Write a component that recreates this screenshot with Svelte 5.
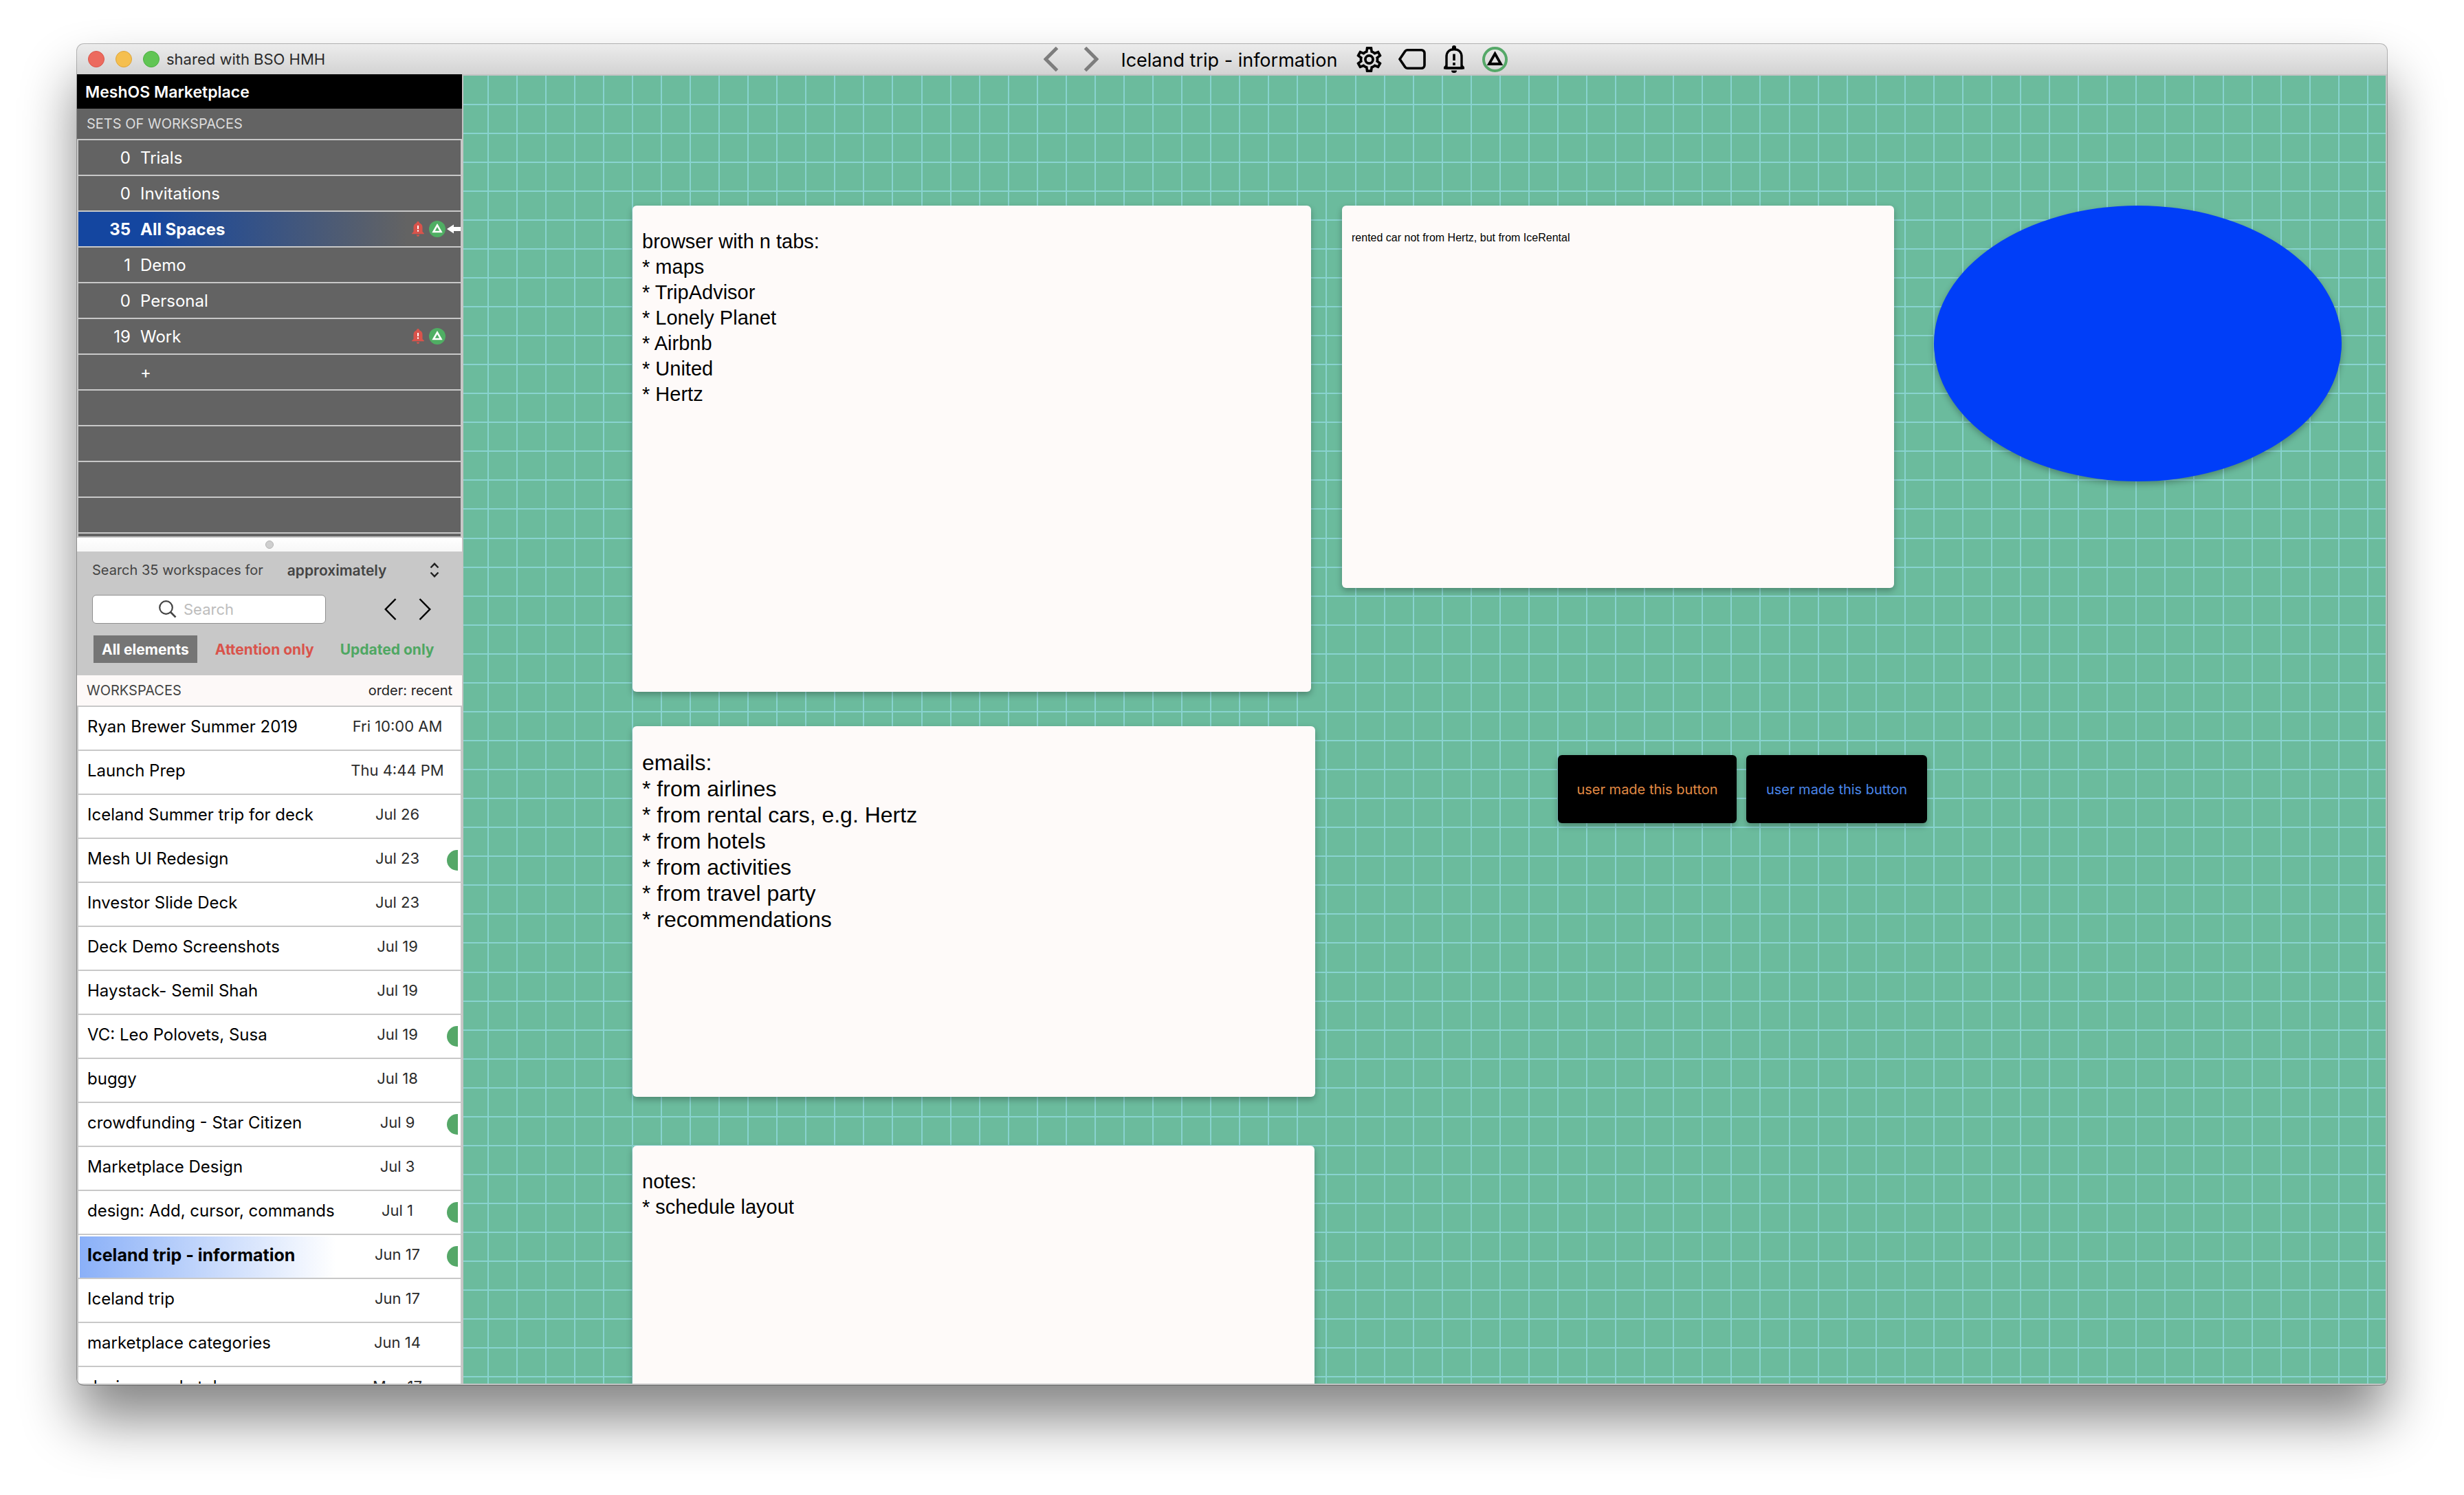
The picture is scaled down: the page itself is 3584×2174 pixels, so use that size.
<script>
  const sets = [
    { count: 0, name: 'Trials' },
    { count: 0, name: 'Invitations' },
    { count: 35, name: 'All Spaces', alerts: true, current: true },
    { count: 1, name: 'Demo' },
    { count: 0, name: 'Personal' },
    { count: 19, name: 'Work', alerts: true },
    { count: '', name: '+' }
  ];
  const emptySetRows = [1, 2, 3, 4, 5];

  const workspaces = [
    { name: 'Ryan Brewer Summer 2019', date: 'Fri 10:00 AM' },
    { name: 'Launch Prep', date: 'Thu 4:44 PM' },
    { name: 'Iceland Summer trip for deck', date: 'Jul 26' },
    { name: 'Mesh UI Redesign', date: 'Jul 23', updated: true },
    { name: 'Investor Slide Deck', date: 'Jul 23' },
    { name: 'Deck Demo Screenshots', date: 'Jul 19' },
    { name: 'Haystack- Semil Shah', date: 'Jul 19' },
    { name: 'VC: Leo Polovets, Susa', date: 'Jul 19', updated: true },
    { name: 'buggy', date: 'Jul 18' },
    { name: 'crowdfunding - Star Citizen', date: 'Jul 9', updated: true },
    { name: 'Marketplace Design', date: 'Jul 3' },
    { name: 'design: Add, cursor, commands', date: 'Jul 1', updated: true },
    { name: 'Iceland trip - information', date: 'Jun 17', updated: true, current: true },
    { name: 'Iceland trip', date: 'Jun 17' },
    { name: 'marketplace categories', date: 'Jun 14' },
    { name: 'design: marketplace', date: 'May 17' }
  ];

  const filters = [
    { id: 'all', label: 'All elements' },
    { id: 'attention', label: 'Attention only' },
    { id: 'updated', label: 'Updated only' }
  ];
  let filter = $state('all');
  let match = $state('approximately');
  let query = $state('');

  // Grid cells are 42px wide, with one extra pixel every 15 cells.
  const gridLine = (start, i) => start + i * 42 + Math.floor(i / 15);
  const columns = Array.from({ length: 90 }, (_, i) => gridLine(35, i));
  const rows = Array.from({ length: 70 }, (_, i) => gridLine(41, i));
</script>

{#snippet bell()}
  <svg class="bell" viewBox="0 0 18 22" aria-hidden="true">
    <path fill="#d9534b" d="M9 0c1.300 0 2 1 2 2.300 2.800 1 4.500 3.200 4.500 6.200v6.500l2.300 2.300v1H.2v-1L2.500 15V8.500c0-3 1.700-5.200 4.500-6.200C7 1 7.700 0 9 0zM7 19.500h4c0 1.500-.8 2.500-2 2.500s-2-1-2-2.500z" />
    <path fill="#fff" d="M8 6h2v5H8zM8 12.500h2v2.200H8z" />
  </svg>
{/snippet}

<div class="desktop">
  <div class="window">
    <header class="titlebar">
      <div class="owner">
        <button class="light close" aria-label="Close"></button>
        <button class="light minimize" aria-label="Minimize"></button>
        <button class="light zoom" aria-label="Zoom"></button>
        <span>shared with BSO HMH</span>
      </div>
      <div class="toolbar">
        <div class="history">
          <button aria-label="Back">
            <svg width="22" height="36" viewBox="0 0 22 36"><path d="M19.500 1.500 3 18l16.500 16.500" fill="none" stroke="#7d7d7d" stroke-width="5" /></svg>
          </button>
          <button aria-label="Forward">
            <svg width="22" height="36" viewBox="0 0 22 36"><path d="M2.500 1.500 19 18 2.500 34.500" fill="none" stroke="#7d7d7d" stroke-width="5" /></svg>
          </button>
        </div>
        <h1>Iceland trip - information</h1>
        <button aria-label="Settings">
          <svg width="37" height="37" viewBox="2 2 20 20"><path d="M12,8A4,4 0 0,1 16,12A4,4 0 0,1 12,16A4,4 0 0,1 8,12A4,4 0 0,1 12,8M12,10A2,2 0 0,0 10,12A2,2 0 0,0 12,14A2,2 0 0,0 14,12A2,2 0 0,0 12,10M10,22C9.750,22 9.540,21.820 9.500,21.580L9.130,18.930C8.500,18.680 7.960,18.340 7.440,17.940L4.950,18.950C4.730,19.030 4.460,18.950 4.340,18.730L2.340,15.270C2.210,15.050 2.270,14.780 2.460,14.630L4.570,12.970L4.500,12L4.570,11L2.460,9.370C2.270,9.220 2.210,8.950 2.340,8.730L4.340,5.270C4.460,5.050 4.730,4.960 4.950,5.050L7.440,6.050C7.960,5.660 8.500,5.320 9.130,5.070L9.500,2.420C9.540,2.180 9.750,2 10,2H14C14.250,2 14.460,2.180 14.500,2.420L14.870,5.070C15.500,5.320 16.040,5.660 16.560,6.050L19.050,5.050C19.270,4.960 19.540,5.050 19.660,5.270L21.660,8.730C21.790,8.950 21.730,9.220 21.540,9.370L19.430,11L19.500,12L19.430,13L21.540,14.630C21.730,14.780 21.790,15.050 21.660,15.270L19.660,18.730C19.540,18.950 19.270,19.040 19.050,18.950L16.560,17.950C16.040,18.340 15.500,18.680 14.870,18.930L14.500,21.580C14.460,21.820 14.250,22 14,22H10M11.250,4L10.880,6.610C9.680,6.860 8.620,7.500 7.850,8.390L5.440,7.350L4.690,8.650L6.800,10.200C6.400,11.370 6.400,12.640 6.800,13.800L4.680,15.360L5.430,16.660L7.860,15.620C8.630,16.500 9.680,17.140 10.870,17.380L11.240,20H12.760L13.130,17.390C14.320,17.140 15.370,16.500 16.140,15.620L18.570,16.660L19.320,15.360L17.200,13.810C17.600,12.640 17.600,11.370 17.200,10.200L19.310,8.650L18.560,7.350L16.150,8.390C15.380,7.500 14.320,6.860 13.120,6.620L12.750,4H11.250Z" /></svg>
        </button>
        <button aria-label="Label">
          <svg width="40" height="30" viewBox="0 0 40 30"><path d="M13 1.800h20.500a4.500 4.500 0 0 1 4.500 4.500v17.400a4.500 4.500 0 0 1-4.500 4.500H13a4 4 0 0 1-3.200-1.700L2 15 9.800 3.500A4 4 0 0 1 13 1.800z" fill="none" stroke="#000" stroke-width="3.600" /></svg>
        </button>
        <button aria-label="Alerts">
          <svg width="34" height="40" viewBox="0 0 34 40">
            <path d="M17 0a3 3 0 0 1 3 3v3h-6V3a3 3 0 0 1 3-3zM13 36.500h8a4 3.500 0 0 1-8 0zM2 31.500 6 27v4h22v-4l4 4.500V34.500H2z" />
            <path d="M6 33V16.500C6 9.500 10.500 5.800 17 5.800S28 9.500 28 16.500V33z" fill="none" stroke="#000" stroke-width="3.400" />
            <path d="M15.200 12.500h3.600v9.500h-3.600zM15.200 25h3.600v4h-3.600z" />
          </svg>
        </button>
        <button aria-label="Updates">
          <svg width="37" height="37" viewBox="0 0 37 37">
            <circle cx="18.500" cy="18.500" r="16.500" fill="none" stroke="#55a868" stroke-width="4" />
            <path d="M18.500 10 27 25H10z" fill="none" stroke="#000" stroke-width="3.800" />
          </svg>
        </button>
      </div>
    </header>

    <div class="body">
      <aside class="sidebar">
        <h2 class="product">MeshOS Marketplace</h2>
        <h3 class="sets-heading">SETS OF WORKSPACES</h3>
        <ul class="sets">
          {#each sets as set}
            <li>
              <button class="set" class:current={set.current}>
                <span class="count">{set.count}</span>
                <span class="set-name">{set.name}</span>
                {#if set.alerts}
                  <span class="badges">
                    {@render bell()}
                    <svg class="update" viewBox="0 0 24 24" aria-hidden="true">
                      <circle cx="12" cy="12" r="12" fill="#4fae63" />
                      <path d="M12 6.500 17.500 16h-11z" fill="none" stroke="#fff" stroke-width="2.500" />
                    </svg>
                  </span>
                {/if}
                <span class="pointer">
                  {#if set.current}
                    <svg width="20" height="14" viewBox="0 0 20 14" aria-hidden="true"><path d="M0 7 10 .5V4h10v6H10v3.500z" fill="#fff" /></svg>
                  {/if}
                </span>
              </button>
            </li>
          {/each}
          {#each emptySetRows as row (row)}
            <li class="blank"></li>
          {/each}
        </ul>

        <div class="splitter"><span></span></div>

        <section class="search">
          <div class="search-mode">
            <label for="match">Search 35 workspaces for</label>
            <div class="select">
              <select id="match" bind:value={match}>
                <option>approximately</option>
                <option>exactly</option>
              </select>
              <svg width="14" height="22" viewBox="0 0 14 22" aria-hidden="true"><path d="M1.500 7.500 7 1.800l5.500 5.700M1.500 14.500 7 20.200l5.500-5.700" fill="none" stroke="#222" stroke-width="2.400" /></svg>
            </div>
          </div>
          <div class="search-row">
            <label class="field">
              <svg width="26" height="26" viewBox="0 0 26 26" aria-hidden="true"><circle cx="10.500" cy="10.500" r="9.300" fill="none" stroke="#444" stroke-width="2.200" /><path d="m17 17 7.500 7.500" stroke="#444" stroke-width="2.600" /></svg>
              <input type="text" placeholder="Search" aria-label="Search" bind:value={query} />
            </label>
            <div class="steps">
              <button aria-label="Previous result">
                <svg width="18" height="32" viewBox="0 0 18 32"><path d="M16.500 1 1.800 16l14.700 15" fill="none" stroke="#000" stroke-width="2.500" /></svg>
              </button>
              <button aria-label="Next result">
                <svg width="18" height="32" viewBox="0 0 18 32"><path d="M1.500 1l14.700 15L1.500 31" fill="none" stroke="#000" stroke-width="2.500" /></svg>
              </button>
            </div>
          </div>
          <div class="filters">
            {#each filters as f (f.id)}
              <button class="filter {f.id}" class:active={filter === f.id} aria-pressed={filter === f.id} onclick={() => (filter = f.id)}>{f.label}</button>
            {/each}
          </div>
        </section>

        <div class="list-heading">
          <h3>WORKSPACES</h3>
          <button>order: recent</button>
        </div>
        <ul class="workspaces">
          {#each workspaces as ws}
            <li>
              <button class="workspace" class:current={ws.current}>
                <span class="ws-name">{ws.name}</span>
                <span class="ws-date">{ws.date}</span>
                <span class="ws-dot" class:on={ws.updated}></span>
              </button>
            </li>
          {/each}
        </ul>
      </aside>

      <main class="canvas">
        <svg class="grid" aria-hidden="true">
          {#each rows as y}<rect x="0" {y} width="100%" height="2" />{/each}
          {#each columns as x}<rect {x} y="0" width="2" height="100%" />{/each}
        </svg>

        <article class="note tabs">browser with n tabs:
* maps
* TripAdvisor
* Lonely Planet
* Airbnb
* United
* Hertz</article>
        <article class="note rental">rented car not from Hertz, but from IceRental</article>
        <div class="ellipse"></div>
        <article class="note emails">emails:
* from airlines
* from rental cars, e.g. Hertz
* from hotels
* from activities
* from travel party
* recommendations</article>
        <article class="note notes">notes:
* schedule layout</article>
        <button class="made orange">user made this button</button>
        <button class="made blue">user made this button</button>
      </main>
    </div>
  </div>
</div>

<style>
  :global(body) {
    margin: 0;
    background: #fff;
  }

  .desktop {
    box-sizing: border-box;
    height: 100vh;
    padding: 64px 112px 160px;
    overflow: hidden;
    display: flex;
    font-family: 'Inter', 'Liberation Sans', sans-serif;
    color: #000;
  }

  .desktop :is(h1, h2, h3, ul) {
    margin: 0;
    padding: 0;
    font-weight: 400;
    list-style: none;
  }

  button,
  select,
  input {
    margin: 0;
    padding: 0;
    border: 0;
    background: none;
    font: inherit;
    color: inherit;
  }

  svg {
    display: block;
    flex: none;
  }

  .window {
    flex: 1;
    min-width: 0;
    display: flex;
    flex-direction: column;
    overflow: hidden;
    border-radius: 10px;
    background: #c4c4c4;
    box-shadow:
      0 0 0 1px rgba(0, 0, 0, 0.28),
      0 50px 80px rgba(0, 0, 0, 0.48);
  }

  /* Title bar */
  .titlebar {
    flex: none;
    height: 44px;
    display: grid;
    grid-template-columns: 11fr auto 10fr;
    align-items: center;
    background: linear-gradient(#ececec, #d3d3d3);
  }

  .owner {
    display: flex;
    align-items: center;
    gap: 16px;
    padding-left: 16px;
    font-size: 22px;
    color: #2b2b2b;
  }

  .owner span {
    margin-left: -6px;
  }

  .light {
    width: 24px;
    height: 24px;
    border-radius: 50%;
  }

  .close {
    background: #ec6a5e;
    border: 1px solid #d9564b;
  }

  .minimize {
    background: #f5bf4f;
    border: 1px solid #dca43a;
  }

  .zoom {
    background: #61c554;
    border: 1px solid #4caf40;
  }

  .toolbar {
    display: flex;
    align-items: center;
    gap: 24px;
  }

  .history {
    display: flex;
    gap: 36px;
    margin-right: 8px;
  }

  .titlebar h1 {
    padding: 4px 4px 0 0;
    font-size: 27px;
    line-height: 36px;
    white-space: nowrap;
  }

  .body {
    flex: 1;
    min-height: 0;
    display: flex;
    padding: 0 2px 2px 0;
  }

  /* Sidebar */
  .sidebar {
    flex: none;
    width: 560px;
    margin-right: 2px;
    display: flex;
    flex-direction: column;
    background: #fff;
  }

  .sidebar .product {
    flex: none;
    padding: 2px 12px 0;
    font-size: 23px;
    font-weight: 600;
    line-height: 48px;
    color: #fff;
    background: #000;
  }

  .sidebar .sets-heading {
    flex: none;
    padding: 0 14px;
    font-size: 20px;
    line-height: 44px;
    color: #dcdcdc;
    background: #636363;
  }

  .sets {
    flex: none;
    box-sizing: border-box;
    height: 580px;
    overflow: hidden;
    border: 2px solid #c8c8c8;
    border-top: 0;
    background: #636363;
    color: #fff;
    font-size: 24px;
  }

  .desktop .sets,
  .desktop .workspaces {
    padding: 0;
  }

  .sets li {
    height: 50px;
    border-top: 2px solid #c8c8c8;
  }

  .set {
    width: 100%;
    height: 50px;
    display: flex;
    align-items: center;
    text-align: left;
  }

  .set.current {
    font-weight: 700;
    background: linear-gradient(90deg, #1446a0 18%, #636363 86%);
  }

  .count {
    width: 76px;
    text-align: right;
  }

  .set-name {
    flex: 1;
    padding-left: 14px;
  }

  .badges {
    display: flex;
    align-items: center;
    gap: 7px;
  }

  .bell {
    width: 18px;
    height: 22px;
  }

  .update {
    width: 24px;
    height: 24px;
  }

  .pointer {
    width: 20px;
    margin-left: 2px;
  }

  .splitter {
    flex: none;
    height: 20px;
    display: grid;
    place-items: center;
    background: linear-gradient(#fff, #f7f7f7);
  }

  .splitter span {
    width: 10px;
    height: 10px;
    border: 1px solid #b4b4b4;
    border-radius: 50%;
    background: #cfcfcf;
  }

  /* Search panel */
  .search {
    flex: none;
    padding: 0 22px 18px;
    background: #c8c8c8;
  }

  .search-mode {
    height: 54px;
    display: flex;
    align-items: center;
    gap: 35px;
    font-size: 20px;
    color: #444;
  }

  .select {
    flex: 1;
    display: grid;
    align-items: center;
  }

  .select select,
  .select svg {
    grid-area: 1 / 1;
  }

  .select select {
    appearance: none;
    font-size: 21px;
    font-weight: 600;
  }

  .select svg {
    justify-self: end;
    margin-right: 11px;
    pointer-events: none;
  }

  .search-row {
    display: flex;
    align-items: center;
    justify-content: space-between;
    margin-top: 9px;
  }

  .field {
    box-sizing: border-box;
    width: 340px;
    height: 42px;
    display: flex;
    align-items: center;
    gap: 10px;
    padding-left: 96px;
    border: 1px solid #8f8f8f;
    border-radius: 6px;
    background: #fff;
  }

  .field input {
    flex: 1;
    min-width: 0;
    font-size: 22px;
    outline: 0;
  }

  .field input::placeholder {
    color: #bdbdbd;
    opacity: 1;
  }

  .steps {
    display: flex;
    gap: 32px;
    padding-right: 23px;
  }

  .filters {
    display: flex;
    margin-top: 17px;
    padding-left: 2px;
    gap: 14px;
    font-size: 21px;
    font-weight: 700;
  }

  .filter {
    height: 40px;
    padding: 0 12px;
    white-space: nowrap;
  }

  .attention {
    color: #d9534b;
  }

  .updated {
    color: #4fa763;
  }

  .filter.active {
    color: #fff;
    background: #757575;
  }

  /* Workspace list */
  .list-heading {
    flex: none;
    height: 44px;
    display: flex;
    align-items: center;
    justify-content: space-between;
    padding: 0 14px;
    font-size: 20px;
    background: #fdf9f8;
  }

  .list-heading h3 {
    font-size: 20px;
    color: #444;
  }

  .list-heading button {
    color: #222;
  }

  .workspaces {
    flex: 1;
    min-height: 0;
    overflow: hidden;
    border: solid #c8c8c8;
    border-width: 0 2px;
  }

  .workspaces li {
    height: 62px;
    border-top: 2px solid #c8c8c8;
  }

  .workspace {
    width: 100%;
    height: 62px;
    display: flex;
    align-items: center;
    padding: 0 4px 0 13px;
    text-align: left;
    font-size: 24px;
    line-height: 30px;
  }

  .workspace.current {
    background: linear-gradient(90deg, #8ab0f8, #fff) no-repeat 2px 2px / 67% 60px;
  }

  .ws-name {
    flex: 1;
    padding-bottom: 4px;
    white-space: nowrap;
  }

  .current .ws-name {
    font-size: 25px;
    font-weight: 700;
  }

  .ws-date {
    width: 144px;
    padding-bottom: 6px;
    text-align: center;
    font-size: 22px;
    color: #2b2b2b;
    white-space: nowrap;
  }

  .ws-dot {
    width: 16px;
    height: 30px;
    border-radius: 16px 0 0 16px;
  }

  .ws-dot.on {
    background: #55a868;
  }

  /* Free canvas */
  .canvas {
    position: relative;
    flex: 1;
    min-width: 0;
    margin-top: 2px;
    overflow: hidden;
    background: #6bbb9d;
  }

  .grid {
    position: absolute;
    inset: 0;
    width: 100%;
    height: 100%;
    fill: #88d3cf;
  }

  .note,
  .ellipse,
  .made {
    position: absolute;
    box-sizing: border-box;
    box-shadow: 0 4px 10px rgba(0, 0, 0, 0.28);
  }

  .note {
    padding: 34px 14px;
    border-radius: 6px;
    background: #fefaf9;
    font-family: 'Liberation Sans', sans-serif;
    font-size: 29px;
    line-height: 37px;
    white-space: pre-line;
  }

  .tabs {
    left: 246px;
    top: 189px;
    width: 987px;
    height: 707px;
  }

  .rental {
    left: 1278px;
    top: 189px;
    width: 803px;
    height: 556px;
    font-size: 16px;
    line-height: 26px;
  }

  .emails {
    left: 246px;
    top: 946px;
    width: 993px;
    height: 539px;
    font-size: 32px;
    line-height: 38px;
  }

  .notes {
    left: 246px;
    top: 1556px;
    width: 992px;
    height: 540px;
  }

  .ellipse {
    left: 2139px;
    top: 189px;
    width: 593px;
    height: 401px;
    border-radius: 50%;
    background: #003ef8;
  }

  .made {
    top: 988px;
    height: 99px;
    border-radius: 6px;
    background: #000;
    font-size: 20px;
  }

  .orange {
    left: 1592px;
    width: 260px;
    color: #e08a45;
  }

  .blue {
    left: 1866px;
    width: 263px;
    color: #4a86e8;
  }
</style>
